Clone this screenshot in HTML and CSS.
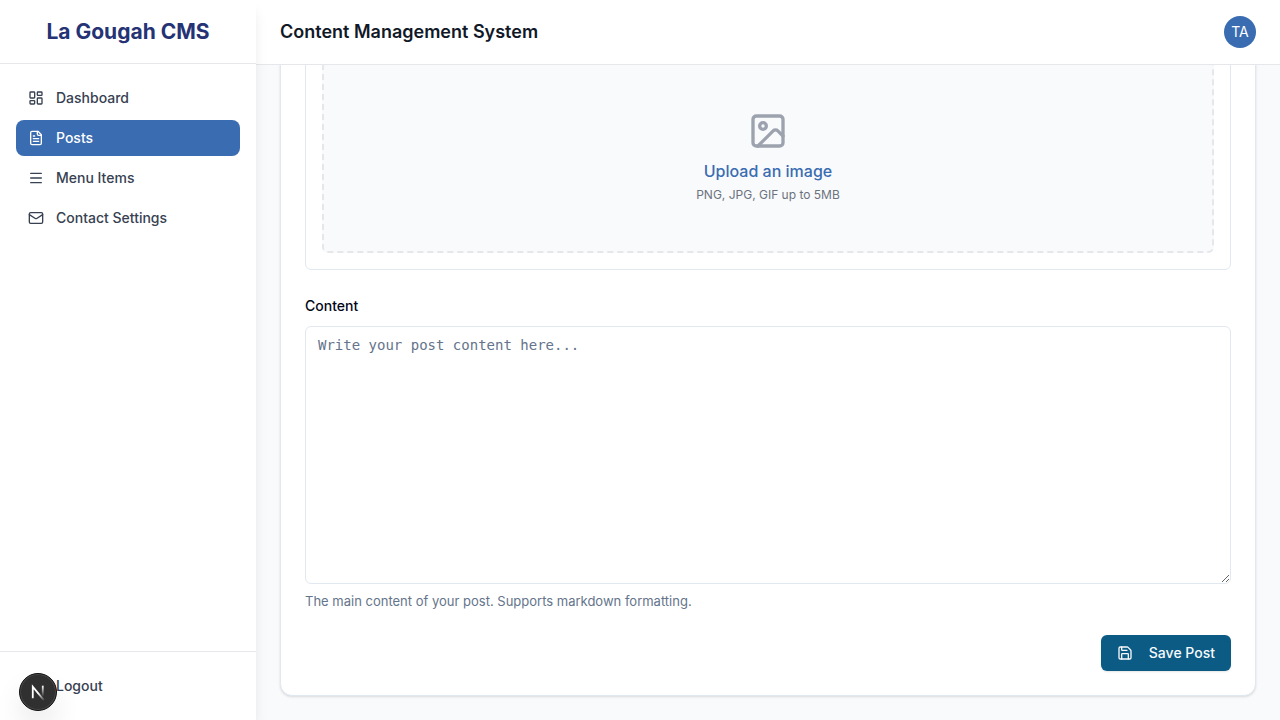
FILE: index.html
```html
<!DOCTYPE html>
<html lang="en">
<head>
<meta charset="utf-8">
<meta name="viewport" content="width=device-width, initial-scale=1">
<title>La Gougah CMS</title>
<link rel="stylesheet" href="styles.css">
</head>
<body>
<div class="app">
  <aside class="sidebar">
    <div class="brand">La Gougah CMS</div>
    <nav class="nav">
      <a class="nav-link" href="#dashboard">
        <svg class="icon" viewBox="0 0 24 24"><rect x="3" y="3" width="7" height="9" rx="1"/><rect x="14" y="3" width="7" height="5" rx="1"/><rect x="14" y="12" width="7" height="9" rx="1"/><rect x="3" y="16" width="7" height="5" rx="1"/></svg>
        Dashboard
      </a>
      <a class="nav-link active" href="#posts" aria-current="page">
        <svg class="icon" viewBox="0 0 24 24"><path d="M15 2H6a2 2 0 0 0-2 2v16a2 2 0 0 0 2 2h12a2 2 0 0 0 2-2V7Z"/><path d="M14 2v4a2 2 0 0 0 2 2h4"/><path d="M10 9H8M16 13H8M16 17H8"/></svg>
        Posts
      </a>
      <a class="nav-link" href="#menu">
        <svg class="icon" viewBox="0 0 24 24"><path d="M4 5h16M4 12h16M4 19h16"/></svg>
        Menu Items
      </a>
      <a class="nav-link" href="#contact">
        <svg class="icon" viewBox="0 0 24 24"><rect x="2" y="4" width="20" height="16" rx="2"/><path d="m22 7-8.97 5.7a1.94 1.94 0 0 1-2.06 0L2 7"/></svg>
        Contact Settings
      </a>
    </nav>
    <div class="sidebar-footer">
      <button class="nav-link" type="button">
        <svg class="icon" viewBox="0 0 24 24"><path d="M9 21H5a2 2 0 0 1-2-2V5a2 2 0 0 1 2-2h4M16 17l5-5-5-5M21 12H9"/></svg>
        Logout
      </button>
    </div>
  </aside>

  <div class="page">
    <header class="topbar">
      <h1 class="title">Content Management System</h1>
      <button class="avatar" type="button">TA</button>
    </header>
    <main class="main">
      <form class="card">
        <section class="upload-panel">
          <div class="dropzone">
            <svg class="image-icon" viewBox="0 0 24 24"><rect x="3" y="3" width="18" height="18" rx="2"/><circle cx="9" cy="9" r="2"/><path d="m21 15-3.086-3.086a2 2 0 0 0-2.828 0L6 21"/></svg>
            <button class="upload-button" type="button">Upload an image</button>
            <p class="upload-hint">PNG, JPG, GIF up to 5MB</p>
          </div>
        </section>
        <div class="field">
          <label class="label" for="content">Content</label>
          <textarea class="textarea" id="content" aria-describedby="content-help" placeholder="Write your post content here..."></textarea>
          <p class="help" id="content-help">The main content of your post. Supports markdown formatting.</p>
        </div>
        <div class="actions">
          <button class="save" type="submit">
            <svg class="icon" viewBox="0 0 24 24"><path d="M15.2 3a2 2 0 0 1 1.4.6l3.8 3.8a2 2 0 0 1 .6 1.4V19a2 2 0 0 1-2 2H5a2 2 0 0 1-2-2V5a2 2 0 0 1 2-2z"/><path d="M17 21v-7a1 1 0 0 0-1-1H8a1 1 0 0 0-1 1v7"/><path d="M7 3v4a1 1 0 0 0 1 1h7"/></svg>
            Save Post
          </button>
        </div>
      </form>
    </main>
  </div>

  <button class="dev-badge" type="button" aria-label="Open developer tools">
    <svg class="dev-mark" viewBox="0 0 40 40" fill="none">
      <defs>
        <linearGradient id="fade-diagonal" gradientUnits="userSpaceOnUse" x1="21" y1="21" x2="27" y2="30"><stop stop-color="#fff"/><stop offset="1" stop-color="#fff" stop-opacity="0"/></linearGradient>
        <linearGradient id="fade-stem" gradientUnits="userSpaceOnUse" x1="25" y1="13" x2="25" y2="25"><stop stop-color="#fff"/><stop offset="1" stop-color="#fff" stop-opacity="0"/></linearGradient>
      </defs>
      <path d="M14.2 27V14.2L26.5 29" stroke="url(#fade-diagonal)" stroke-width="2"/>
      <path d="M25.3 13v13" stroke="url(#fade-stem)" stroke-width="2"/>
    </svg>
  </button>
</div>
</body>
</html>
```
FILE: styles.css
```css
* { box-sizing: border-box; }

body {
  margin: 0;
  color: #020817;
  background: #f9fafb;
  font-family: Inter, "Liberation Sans", sans-serif;
  font-size: 14px;
  line-height: 20px;
}

h1, p { margin: 0; }
button { border: 0; font: inherit; cursor: pointer; }

.app { display: flex; height: 100vh; overflow: hidden; }

.icon {
  flex: none;
  width: 16px;
  height: 16px;
  fill: none;
  stroke: currentColor;
  stroke-width: 2;
  stroke-linecap: round;
  stroke-linejoin: round;
}

.sidebar {
  z-index: 1;
  display: flex;
  flex: none;
  flex-direction: column;
  width: 256px;
  background: #fff;
  box-shadow: 0 10px 15px -3px rgb(0 0 0 / 10%), 0 4px 6px -4px rgb(0 0 0 / 10%);
}

.brand {
  display: flex;
  align-items: center;
  justify-content: center;
  height: 64px;
  border-bottom: 1px solid #e5e7eb;
  color: #253375;
  font-size: 21px;
  font-weight: 700;
}

.nav {
  display: flex;
  flex: 1;
  flex-direction: column;
  gap: 4px;
  padding: 16px;
}

.nav-link {
  display: flex;
  align-items: center;
  gap: 12px;
  width: 100%;
  padding: 8px 12px;
  border-radius: 8px;
  color: #374151;
  background: none;
  font-weight: 500;
  text-decoration: none;
}

.nav-link.active { color: #fff; background: #3a6cb1; }

.sidebar-footer { padding: 16px; border-top: 1px solid #e5e7eb; }

.page { display: flex; flex: 1; flex-direction: column; min-width: 0; }

.topbar {
  display: flex;
  flex: none;
  align-items: center;
  justify-content: space-between;
  padding: 16px 24px;
  border-bottom: 1px solid #e5e7eb;
  background: #fff;
}

.title { color: #111827; font-size: 18px; font-weight: 600; line-height: 28px; }

.avatar {
  width: 32px;
  height: 32px;
  padding: 0;
  border-radius: 50%;
  color: #fff;
  background: #3a6cb1;
}

.main {
  display: flex;
  flex: 1;
  flex-direction: column;
  justify-content: flex-end;
  min-height: 0;
  padding: 24px;
  overflow: hidden;
}

.card {
  display: flex;
  flex: none;
  flex-direction: column;
  gap: 24px;
  padding: 24px;
  border: 1px solid #e2e8f0;
  border-radius: 12px;
  background: #fff;
  box-shadow: 0 1px 3px rgb(0 0 0 / 10%), 0 1px 2px -1px rgb(0 0 0 / 10%);
}

.upload-panel { padding: 16px; border: 1px solid #e2e8f0; border-radius: 6px; }

.dropzone {
  display: flex;
  flex-direction: column;
  align-items: center;
  padding: 48px;
  border: 2px dashed #e5e7eb;
  border-radius: 6px;
  background: #f9fafb;
}

.image-icon {
  width: 40px;
  height: 40px;
  margin-bottom: 8px;
  fill: none;
  stroke: #9ca3af;
  stroke-width: 2;
  stroke-linecap: round;
  stroke-linejoin: round;
}

.upload-button {
  padding: 0;
  color: #3a6cb1;
  background: none;
  font-size: 16px;
  font-weight: 500;
  line-height: 24px;
}

.upload-hint { margin-top: 4px; color: #6b7280; font-size: 12px; line-height: 16px; }

.field { display: flex; flex-direction: column; gap: 8px; }
.label { font-weight: 500; line-height: 24px; }

.textarea {
  width: 100%;
  height: 258px;
  padding: 8px 12px;
  border: 1px solid #e2e8f0;
  border-radius: 6px;
  color: #020817;
  background: #fff;
  font: 14px/20px "DejaVu Sans Mono", monospace;
  resize: vertical;
}

.textarea::placeholder { color: #64748b; opacity: 1; }
.help { color: #64748b; font-size: 13px; line-height: 19px; }

.actions { display: flex; justify-content: flex-end; }

.save {
  display: flex;
  align-items: center;
  gap: 16px;
  padding: 8px 16px;
  border-radius: 6px;
  color: #f8fafc;
  background: #0c5b84;
  font-weight: 500;
  box-shadow: 0 1px 2px rgb(0 0 0 / 10%);
}

.dev-badge {
  position: absolute;
  z-index: 2;
  bottom: 9px;
  left: 19px;
  width: 38px;
  height: 38px;
  padding: 0;
  border: 1px solid #111;
  border-radius: 50%;
  background: #303030;
  box-shadow: inset 0 0 0 1px #484848, 0 16px 32px -8px rgb(0 0 0 / 24%);
}

.dev-mark { display: block; width: 36px; height: 36px; }
```
